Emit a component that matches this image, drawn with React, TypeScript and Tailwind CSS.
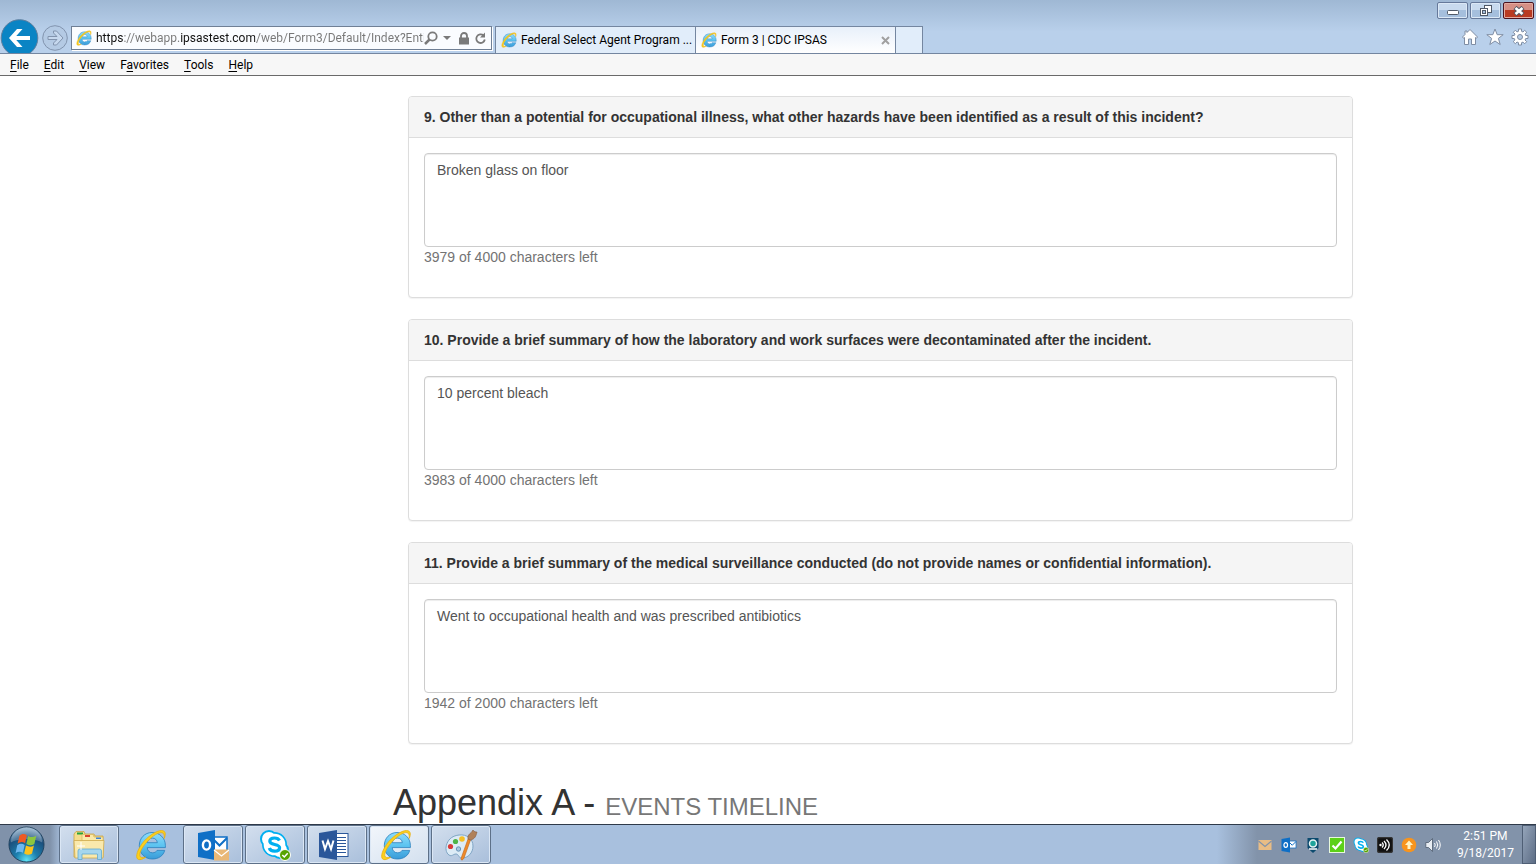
import { useState } from 'react'
import type { ReactNode } from 'react'

interface Question {
  id: string
  title: string
  answer: string
  left: string
}

const QUESTIONS: Question[] = [
  {
    id: 'q9',
    title: '9. Other than a potential for occupational illness, what other hazards have been identified as a result of this incident?',
    answer: 'Broken glass on floor',
    left: '3979 of 4000 characters left'
  },
  {
    id: 'q10',
    title: '10. Provide a brief summary of how the laboratory and work surfaces were decontaminated after the incident.',
    answer: '10 percent bleach',
    left: '3983 of 4000 characters left'
  },
  {
    id: 'q11',
    title: '11. Provide a brief summary of the medical surveillance conducted (do not provide names or confidential information).',
    answer: 'Went to occupational health and was prescribed antibiotics',
    left: '1942 of 2000 characters left'
  }
]

// [before, access key, after]
const MENUS: Array<[string, string, string]> = [
  ['', 'F', 'ile'],
  ['', 'E', 'dit'],
  ['', 'V', 'iew'],
  ['F', 'a', 'vorites'],
  ['', 'T', 'ools'],
  ['', 'H', 'elp']
]

function IeLogo({ className }: { className: string }) {
  return (
    <svg viewBox="0 0 32 32" className={className} aria-hidden="true">
      <defs>
        <linearGradient id="ie-blue" x1="0" y1="0" x2="0" y2="1">
          <stop offset="0" stopColor="#8fdcfa" />
          <stop offset="0.5" stopColor="#5cc3f0" />
          <stop offset="1" stopColor="#3a9bd8" />
        </linearGradient>
      </defs>
      <path
        fillRule="evenodd"
        d="M17 3.500C24.600 3.500 30.400 9 30.400 16.500V18.600H12.200C12.600 22 14.600 23.800 17.500 23.800C19.700 23.800 21.200 22.900 22 21.400H29.700C28.200 26.900 23.500 30 17.300 30C9.700 30 4.300 24.500 4.300 16.700C4.300 9.200 9.700 3.500 17 3.500ZM12.300 13.700H22.300C22.100 10.900 20.100 9.100 17.300 9.100C14.600 9.100 12.700 10.900 12.300 13.700Z"
        fill="url(#ie-blue)"
        stroke="#2a7fbd"
        strokeWidth="0.8"
      />
      <path
        d="M29.200 9.500C31.200 5 30.500 1.500 26.500 1.500C21.500 1.500 12 7.500 6.500 15.500C1 23.500 .5 29.500 3.500 30.500C5.300 31.100 8 30 10.600 28.200C7.500 29 5.200 28.800 4.800 26.800C4.100 23.200 8.500 16 14.500 10.300C20 5 25.800 2.400 28 4.100C29.300 5.100 29.400 7 29.200 9.500Z"
        fill="#fbd01c"
        stroke="#e8ae12"
        strokeWidth="0.8"
      />
    </svg>
  )
}

function NavButtons() {
  return (
    <div className="relative flex w-[71px] shrink-0 items-end">
      <button type="button" aria-label="Back" className="h-[34px] w-[39px] overflow-hidden">
        <svg viewBox="0 0 39 38" className="h-[38px] w-[39px]">
          <circle cx="19.500" cy="19" r="18.300" fill="#0a84c4" stroke="#5e7f9f" strokeWidth="1" />
          <path d="M30 19H12" stroke="#fff" strokeWidth="4" />
          <path d="M9 19L17 10H22.500L14.500 19L22.500 28H17Z" fill="#fff" />
        </svg>
      </button>
      <button type="button" aria-label="Forward" className="mb-[2px] ml-[3px]">
        <svg viewBox="0 0 26 26" className="size-[26px]">
          <circle cx="13" cy="13" r="12.300" fill="#b4cae4" stroke="#8294ae" />
          <path
            d="M6 11.500H15L11.500 8V6H14.500L21 13L14.500 20H11.500V18L15 14.500H6Z"
            fill="#c6d8ee"
            stroke="#8294ae"
          />
        </svg>
      </button>
    </div>
  )
}

function AddressBar() {
  return (
    <div className="mb-[3px] flex h-6 w-[421px] shrink-0 items-center border border-[#6f7f95] bg-[#fafcff] pl-1 pr-1 shadow-[1px_1px_0_#fff]">
      <IeLogo className="size-4 shrink-0" />
      <input
        type="text"
        aria-label="Address"
        defaultValue="https://webapp.ipsastest.com/web/Form3/Default/Index?Enti"
        className="ml-1 w-0 flex-1 bg-[linear-gradient(90deg,#111_28px,#777_28px,#777_84px,#111_84px,#111_159px,#777_159px)] bg-clip-text text-[12px] text-transparent outline-none"
      />
      <button type="button" aria-label="Search">
        <svg viewBox="0 0 14 14" className="size-[14px]" fill="none" stroke="#7a7a7a" strokeWidth="1.8">
          <circle cx="8.500" cy="5.500" r="4.200" />
          <path d="M5.500 8.500L1 13" strokeWidth="2.500" />
        </svg>
      </button>
      <button type="button" aria-label="Show history" className="ml-[5px]">
        <svg viewBox="0 0 8 4" className="h-1 w-2">
          <path d="M0 0H8L4 4Z" fill="#7a7a7a" />
        </svg>
      </button>
      <svg viewBox="0 0 12 13" className="ml-[7px] h-[13px] w-3">
        <path d="M3 6V4A3 3 0 0 1 9 4V6" fill="none" stroke="#7a7a7a" strokeWidth="1.800" />
        <rect x="1" y="5.500" width="10" height="7" fill="#7a7a7a" />
      </svg>
      <button type="button" aria-label="Refresh" className="ml-[4px]">
        <svg viewBox="0 0 13 13" className="size-[13px]">
          <path d="M9.500 3.500A4.300 4.300 0 1 0 10.800 7.500" fill="none" stroke="#7a7a7a" strokeWidth="1.800" />
          <path d="M11 0.500V5.500H6Z" fill="#7a7a7a" />
        </svg>
      </button>
    </div>
  )
}

function WindowButtons() {
  const plain =
    'flex h-[17px] w-[31px] items-center justify-center rounded-[2px] border border-[#66799a] bg-linear-to-b from-[#c8daee] from-50% to-[#a5bfdd] to-50% shadow-[inset_0_0_0_1px_#dbe8f6]'
  return (
    <div className="absolute right-[2px] top-[2px] flex gap-[2px]">
      <button type="button" aria-label="Minimize" className={plain}>
        <svg viewBox="0 0 12 5" className="mt-1 h-[5px] w-3">
          <rect x="0.500" y="0.500" width="11" height="4" rx="1" fill="#fff" stroke="#515a68" />
        </svg>
      </button>
      <button type="button" aria-label="Restore" className={plain}>
        <svg viewBox="0 0 12 11" className="h-[11px] w-3" stroke="#515a68">
          <rect x="4.500" y="0.500" width="7" height="7" fill="#fff" />
          <rect x="0.500" y="3.500" width="7" height="7" fill="#fff" />
          <rect x="2.500" y="5.500" width="3" height="3" fill="#a5bfdd" />
        </svg>
      </button>
      <button
        type="button"
        aria-label="Close"
        className="flex h-[17px] w-[31px] items-center justify-center rounded-[2px] border border-[#4b1320] bg-linear-to-b from-[#d68f85] from-50% to-[#b93a22] to-50% shadow-[inset_0_0_0_1px_#e3aaa0]"
      >
        <svg viewBox="0 0 12 10" className="h-[10px] w-3">
          <path d="M2 1.500L10 8.500M10 1.500L2 8.500" stroke="#565a66" strokeWidth="4.600" />
          <path d="M2.500 2L9.500 8M9.500 2L2.500 8" stroke="#fff" strokeWidth="2.600" />
        </svg>
      </button>
    </div>
  )
}

function BrowserTools() {
  return (
    <div className="mb-[7px] ml-auto mr-[7px] flex items-center gap-[7px]">
      <button type="button" aria-label="Home">
        <svg viewBox="0 0 18 18" className="size-[18px]" fill="#fff" stroke="#7f8da3">
          <path d="M9 1.500L16.500 9L15.500 10.200L14.500 9.500V16.500H10.500V11H7.500V16.500H3.500V9.500L2.500 10.200L1.500 9L4 6.500V3H6V4.500Z" />
        </svg>
      </button>
      <button type="button" aria-label="Favorites">
        <svg viewBox="0 0 18 18" className="size-[18px]" fill="#fff" stroke="#7f8da3">
          <path d="M9 1L11.200 6.700H17.200L12.400 10.400L14.200 16.500L9 13L3.800 16.500L5.600 10.400L.8 6.700H6.800Z" />
        </svg>
      </button>
      <button type="button" aria-label="Tools">
        <svg viewBox="0 0 18 18" className="size-[18px]" fill="#fff" stroke="#7f8da3">
          <path d="M7.500 1H10.500V3.300L12 4L13.700 2.300L15.800 4.400L14.100 6L14.700 7.500H17V10.500H14.700L14 12L15.700 13.700L13.600 15.800L12 14.100L10.500 14.700V17H7.500V14.700L6 14L4.300 15.700L2.200 13.600L3.900 12L3.300 10.500H1V7.500H3.300L4 6L2.300 4.300L4.400 2.200L6 3.900L7.500 3.300Z" />
          <circle cx="9" cy="9" r="2.500" fill="#b9cfe9" />
        </svg>
      </button>
    </div>
  )
}

function BrowserChrome() {
  return (
    <header className="shrink-0">
      <div className="relative flex h-[54px] items-end border-b border-[#7486a0] bg-linear-to-b from-[#9fb8d4] to-[#b9d0eb] to-60%">
        <NavButtons />
        <AddressBar />
        <div role="tablist" className="ml-[3px] flex h-[27px] border border-b-0 border-[#7486a0] bg-[#e1edfa] text-[12px]">
          <button type="button" role="tab" className="flex w-[200px] items-center gap-1 border-r border-[#7486a0] px-[5px]">
            <IeLogo className="size-4 shrink-0" />
            <span className="whitespace-nowrap">Federal Select Agent Program ...</span>
          </button>
          <div className="flex w-[200px] items-center border-r border-[#7486a0] bg-linear-to-b from-[#e8f0fa] to-white px-[5px]">
            <button type="button" role="tab" aria-selected="true" className="flex flex-1 items-center gap-1">
              <IeLogo className="size-4 shrink-0" />
              <span className="whitespace-nowrap">Form 3 | CDC IPSAS</span>
            </button>
            <button type="button" aria-label="Close tab">
              <svg viewBox="0 0 9 9" className="size-[9px]">
                <path d="M1 1L8 8M8 1L1 8" stroke="#a0a0a0" strokeWidth="2" />
              </svg>
            </button>
          </div>
          <button type="button" aria-label="New tab" className="w-[26px]" />
        </div>
        <BrowserTools />
        <WindowButtons />
      </div>
      <nav className="flex h-[22px] items-center gap-[15px] border-b border-[#6a6a6a] bg-[#f7f7f7] px-[10px] text-[12px]">
        {MENUS.map(([before, key, after]) => (
          <button type="button" key={before + key + after}>
            {before}
            <span className="underline underline-offset-2">{key}</span>
            {after}
          </button>
        ))}
      </nav>
    </header>
  )
}

function QuestionPanel({ question }: { question: Question }) {
  const [value, setValue] = useState(question.answer)
  return (
    <section className="rounded border border-[#ddd] bg-white shadow-[0_1px_1px_rgba(0,0,0,0.05)]">
      <label
        htmlFor={question.id}
        className="block rounded-t-[3px] border-b border-[#ddd] bg-[#f5f5f5] px-[15px] py-[10px] font-bold"
      >
        {question.title}
      </label>
      <div className="px-[15px] pb-[30px] pt-[15px]">
        <textarea
          id={question.id}
          value={value}
          onChange={(e) => setValue(e.target.value)}
          className="block h-[94px] w-full resize-none rounded border border-[#ccc] px-3 py-[6px] text-[#555] shadow-[inset_0_1px_1px_rgba(0,0,0,0.075)] outline-none"
        />
        <p className="text-[#737373]">{question.left}</p>
      </div>
    </section>
  )
}

function TaskButton({ label, active, children }: { label: string; active?: boolean; children: ReactNode }) {
  return (
    <button
      type="button"
      aria-label={label}
      className={
        'flex h-full w-[60px] items-center justify-center rounded-[3px] border border-[#5d7088] shadow-[inset_0_0_0_1px_#dbe7f5] ' +
        (active
          ? 'bg-linear-to-br from-[#f2f6fb] to-[#d3e0ef]'
          : 'bg-linear-to-br from-[#d3dfee] to-[#a9bfdb]')
      }
    >
      {children}
    </button>
  )
}

function StartButton() {
  return (
    <button type="button" aria-label="Start" className="ml-2 mr-[14px]">
      <svg viewBox="0 0 38 38" className="size-[37px]">
        <defs>
          <radialGradient id="orb" cx="0.5" cy="0.95" r="0.9">
            <stop offset="0" stopColor="#5fe3f5" />
            <stop offset="0.35" stopColor="#1c7fae" />
            <stop offset="0.75" stopColor="#1b4f7c" />
            <stop offset="1" stopColor="#7fa3c2" />
          </radialGradient>
        </defs>
        <circle cx="19" cy="19" r="18" fill="url(#orb)" stroke="#22435f" />
        <path d="M3 17A16 16 0 0 1 35 17C28 12 10 12 3 17Z" fill="#fff" opacity="0.25" />
        <g transform="translate(0 -3.5) scale(1.02 1.18)">
          <path d="M11.500 11.500C14 9.500 16.500 9.500 19 11L17.200 18C14.700 16.500 12.200 16.600 9.700 18.300Z" fill="#ee5a24" />
          <path d="M20.300 11.600C23 13 25.800 13 28.500 11.400L26.500 18.600C24 20 21.300 20 18.500 18.600Z" fill="#8cc63f" />
          <path d="M9.300 19.700C11.800 18 14.300 18 16.800 19.400L15 26.300C12.500 24.900 10 25 7.600 26.600Z" fill="#6db8f0" />
          <path d="M18.100 20C20.800 21.300 23.500 21.400 26.100 20L24.200 27C21.600 28.500 18.900 28.400 16.300 27Z" fill="#fcc21b" />
        </g>
      </svg>
    </button>
  )
}

function FolderIcon() {
  return (
    <svg viewBox="0 0 34 32" className="h-8 w-[34px]">
      <path d="M2 5L4 2.500H12L13 5H22L23 7H31V28H2Z" fill="#f5dd8c" stroke="#c9a548" strokeWidth="0.800" />
      <rect x="5" y="3.500" width="6" height="2" fill="#27a23a" />
      <path d="M10 9V5.500H21L22 8H31V12H10Z" fill="#fbeaa9" stroke="#d1b053" strokeWidth="0.600" />
      <rect x="13" y="6" width="5" height="2" fill="#d9432f" />
      <rect x="24" y="8.500" width="5" height="1.500" fill="#3d83d6" />
      <path d="M2 11.500H32L31 29H3Z" fill="#fae9ac" stroke="#cfab4e" strokeWidth="0.800" />
      <path d="M6 30.500V22Q6 20 8 20H27.500Q29.500 20 29.500 22V30.500H25.500V25H10V30.500Z" fill="#a5d6ee" stroke="#5fa9d2" strokeWidth="0.800" />
      <path d="M9 13V21M5 17H13" stroke="#fff" />
    </svg>
  )
}

function OutlookIcon({ className, mail }: { className: string; mail?: boolean }) {
  return (
    <svg viewBox="0 0 32 32" className={className}>
      <rect x="15" y="8" width="15" height="14" fill="#fff" stroke="#0f6fc6" strokeWidth="1.500" />
      <path d="M15 9L22.500 16.500L30 9" fill="none" stroke="#0f6fc6" strokeWidth="2" />
      <path d="M1 4L18 1V31L1 28Z" fill="#0f6fc6" />
      <ellipse cx="9.500" cy="16" rx="3.600" ry="4.600" fill="none" stroke="#fff" strokeWidth="2.400" />
      {mail && (
        <>
          <rect x="17" y="20.500" width="15" height="11" fill="#e9b877" />
          <path d="M17 21L24.500 27L32 21" fill="none" stroke="#fff" strokeWidth="1.200" />
        </>
      )}
    </svg>
  )
}

function SkypeIcon({ className }: { className: string }) {
  return (
    <svg viewBox="0 0 32 32" className={className}>
      <circle cx="10" cy="10" r="9" fill="#00aff0" />
      <circle cx="21" cy="21" r="9" fill="#00aff0" />
      <circle cx="15.500" cy="15.500" r="12.500" fill="#00aff0" />
      <circle cx="10" cy="10" r="7" fill="#fff" />
      <circle cx="21" cy="21" r="7" fill="#fff" />
      <circle cx="15.500" cy="15.500" r="10.800" fill="#fff" />
      <path
        d="M20.500 11.500C19.500 9.500 17.500 9 15.500 9C12.500 9 10.800 10.400 10.800 12.200C10.800 16.600 20.600 14.300 20.600 18.800C20.600 21 18.500 22.200 15.700 22.200C13 22.200 11 21.200 10.300 19"
        fill="none"
        stroke="#00aff0"
        strokeWidth="3.200"
      />
      <circle cx="26" cy="26" r="5.500" fill="#57a300" stroke="#fff" />
      <path d="M23.300 26L25.300 28L28.700 24.300" fill="none" stroke="#fff" strokeWidth="1.500" />
    </svg>
  )
}

function WordIcon() {
  return (
    <svg viewBox="0 0 32 32" className="mr-[6px] size-8">
      <rect x="17" y="4.500" width="13" height="23" fill="#fff" stroke="#2b579a" />
      <path d="M19 8.500H28M19 11.500H28M19 14.500H28M19 17.500H28M19 20.500H28M19 23.500H28" stroke="#2b579a" />
      <path d="M1 4L19 1V31L1 28Z" fill="#2b579a" />
      <path d="M4.500 11.500L7 20L10 12L13 20L15.500 11.500" fill="none" stroke="#fff" strokeWidth="2" />
    </svg>
  )
}

function PaintIcon() {
  return (
    <svg viewBox="0 0 34 32" className="h-8 w-[34px]">
      <path
        d="M15 6C23 5 29 10 29 17C29 24 24 29 18 29C14 29 15 25 12 25C9 25 8 28 5 26C2 24 1 19 3 14.500C5 9.500 9 6.700 15 6Z"
        fill="#dcebf6"
        stroke="#7fa5c5"
      />
      <circle cx="6.500" cy="17.500" r="2.600" fill="#d93a3a" />
      <circle cx="11.500" cy="12.500" r="2.600" fill="#4fb347" />
      <circle cx="18" cy="10" r="2.800" fill="#f5bf26" />
      <circle cx="14.500" cy="20" r="2.200" fill="#a9c6e0" stroke="#6a94b8" />
      <path d="M26.500 11L20 29Q17.500 33 17 29.500L24 10Z" fill="#ee8a2a" stroke="#c0641a" strokeWidth="0.600" />
      <path d="M24 10C23 5 27 5 29 1C30 3 32 3 33 3C32 7 31 10 26.500 11Z" fill="#b08058" stroke="#84593a" strokeWidth="0.600" />
    </svg>
  )
}

function Tray() {
  return (
    <div className="ml-auto flex h-full items-center bg-linear-to-r from-transparent to-[#8293aa] to-[40px] pl-[40px]">
      <div className="flex items-center gap-2">
        <svg viewBox="0 0 16 16" className="size-4">
          <rect x="1.500" y="3" width="13" height="10" fill="#e9bd85" />
          <path d="M1.500 4L8 9.500L14.500 4" fill="none" stroke="#8293aa" strokeWidth="1.200" />
        </svg>
        <OutlookIcon className="size-4" />
        <svg viewBox="0 0 16 16" className="size-4">
          <path d="M2.500 1H13.500V11L8 16L2.500 11Z" fill="#0c4a6e" />
          <circle cx="8" cy="6.500" r="3.500" fill="#1fa39b" stroke="#e6f4f4" strokeWidth="1.500" />
          <path d="M4 12H12" stroke="#fff" strokeWidth="1.500" />
        </svg>
        <svg viewBox="0 0 16 16" className="size-4">
          <rect x="0.500" y="0.500" width="15" height="15" fill="#5cd018" stroke="#e8f8dc" />
          <path d="M3.500 8.500L6.500 11.500L12.500 4.500" fill="none" stroke="#fff" strokeWidth="2.200" />
        </svg>
        <SkypeIcon className="size-4" />
        <svg viewBox="0 0 16 16" className="size-4" fill="none" stroke="#fff" strokeWidth="1.300">
          <rect x="0.500" y="0.500" width="15" height="15" rx="2" fill="#111" stroke="#333" />
          <circle cx="3.500" cy="8" r="1.200" fill="#fff" stroke="none" />
          <path d="M5 5.500Q7.500 8 5 10.500M7 4Q11 8 7 12M9.500 2.500Q15 8 9.500 13.500" />
        </svg>
        <svg viewBox="0 0 16 16" className="size-4">
          <circle cx="8" cy="8" r="7.300" fill="#f7941e" />
          <path d="M8 3.500L12 8H9.500V12H6.500V8H4Z" fill="#fff3c4" />
        </svg>
        <svg viewBox="0 0 16 16" className="size-4" fill="none" stroke="#fff">
          <path d="M.8 5.500H3.500L7.500 1.500V14.500L3.500 10.500H.8Z" fill="#e8edf3" stroke="#4d5a6c" strokeWidth="0.800" />
          <path d="M9.500 6Q11 8 9.500 10M11.500 4.500Q14 8 11.500 11.500M13.500 3Q17 8 13.500 13" />
        </svg>
      </div>
      <button type="button" className="ml-4 mr-2 text-center text-[12px] leading-[17px] text-white">
        2:51 PM
        <br />
        9/18/2017
      </button>
      <button
        type="button"
        aria-label="Show desktop"
        className="h-full w-[14px] border border-[#4f5f75] bg-linear-to-br from-[#95a5ba] to-[#5d6d85]"
      />
    </div>
  )
}

function Taskbar() {
  return (
    <footer className="flex h-10 shrink-0 items-center border-t border-[#2f3a49] bg-linear-to-r from-[#8092aa] from-[50px] to-[#a8c0de] to-[62px]">
      <StartButton />
      <div className="flex h-full gap-[2px]">
        <TaskButton label="Windows Explorer">
          <FolderIcon />
        </TaskButton>
        <button type="button" aria-label="Internet Explorer" className="flex w-[60px] items-center justify-center">
          <IeLogo className="size-8" />
        </button>
        <TaskButton label="Outlook">
          <OutlookIcon className="size-8" mail />
        </TaskButton>
        <TaskButton label="Skype for Business">
          <SkypeIcon className="size-8" />
        </TaskButton>
        <TaskButton label="Word">
          <WordIcon />
        </TaskButton>
        <TaskButton label="Internet Explorer windows" active>
          <IeLogo className="mr-[6px] size-8" />
        </TaskButton>
        <TaskButton label="Paint">
          <PaintIcon />
        </TaskButton>
      </div>
      <Tray />
    </footer>
  )
}

export default function App() {
  return (
    <div className="flex h-screen flex-col overflow-hidden bg-white font-['Roboto',sans-serif] text-black">
      <BrowserChrome />
      <main className="min-h-0 flex-1 overflow-hidden font-['Liberation_Sans',Arial,sans-serif] text-[14px] leading-5 text-[#333]">
        <div className="mx-auto max-w-[1170px] pl-[210px] pt-5">
          <div className="flex flex-col gap-[21px] pl-[15px]">
            {QUESTIONS.map((q) => (
              <QuestionPanel key={q.id} question={q} />
            ))}
          </div>
          <h1 className="pt-[39px] text-[36px] leading-10">
            Appendix A - <small className="text-[24px] text-[#777]">EVENTS TIMELINE</small>
          </h1>
        </div>
      </main>
      <Taskbar />
    </div>
  )
}
